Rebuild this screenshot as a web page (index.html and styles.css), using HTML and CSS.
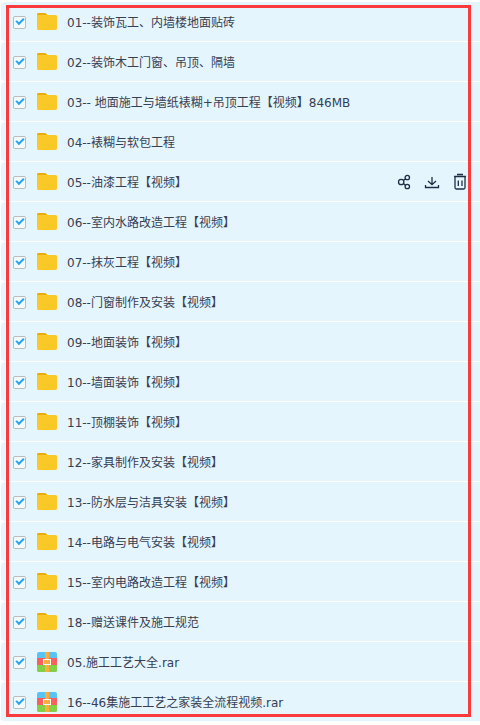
FILE: index.html
```html
<!DOCTYPE html>
<html lang="en">

<head>
    <meta charset="UTF-8" />
    <title>文件列表</title>
    <link rel="stylesheet" href="styles.css">
</head>

<body>
    <svg class="defs" width="0" height="0">
        <symbol id="folder" viewBox="0 0 20 17">
            <path d="M1.500 0h6c.6 0 1 .2 1.400.6L10.500 2H18.500c.8 0 1.500.7 1.500 1.500v12c0 .8-.7 1.500-1.500 1.500h-17C.7 17 0 16.300 0 15.500v-14C0 .7.700 0 1.500 0z" fill="#fac928" />
            <path d="M1.500 0h6c.6 0 1 .2 1.400.6L10.500 2H0v-.5C0 .7.700 0 1.500 0z" fill="#e8ad0c" />
        </symbol>
        <symbol id="rar" viewBox="0 0 20 20">
            <rect width="20" height="20" rx="2" fill="#58c4f6" />
            <rect y="6" width="20" height="7" fill="#fb6061" />
            <path d="M0 13h20v5a2 2 0 0 1-2 2H2a2 2 0 0 1-2-2z" fill="#86cf45" />
            <rect x="8" width="4" height="20" fill="#fbae3c" />
            <rect x="6.500" y="7.500" width="7" height="5" fill="#fbae3c" stroke="#fff" />
        </symbol>
    </svg>

    <div class="list">
        <div class="row">
            <input type="checkbox" class="check" checked />
            <svg class="icon"><use href="#folder" /></svg>
            <span class="name">01--装饰瓦工、内墙楼地面贴砖</span>
        </div>
        <div class="row">
            <input type="checkbox" class="check" checked />
            <svg class="icon"><use href="#folder" /></svg>
            <span class="name">02--装饰木工门窗、吊顶、隔墙</span>
        </div>
        <div class="row">
            <input type="checkbox" class="check" checked />
            <svg class="icon"><use href="#folder" /></svg>
            <span class="name">03-- 地面施工与墙纸裱糊+吊顶工程【视频】846MB</span>
        </div>
        <div class="row">
            <input type="checkbox" class="check" checked />
            <svg class="icon"><use href="#folder" /></svg>
            <span class="name">04--裱糊与软包工程</span>
        </div>
        <div class="row">
            <input type="checkbox" class="check" checked />
            <svg class="icon"><use href="#folder" /></svg>
            <span class="name">05--油漆工程【视频】</span>
            <div class="actions">
                <svg viewBox="0 0 18 18"><circle cx="6.200" cy="9" r="2.700" /><circle cx="12.300" cy="4.500" r="2.200" /><circle cx="12.300" cy="13.500" r="2.200" /><path d="M8.400 7.400l2.100-1.600M8.400 10.600l2.100 1.600" /></svg>
                <svg viewBox="0 0 18 18"><path d="M9 4v7.500M5 8l4 3.700L13 8M2.500 12v2.500h13V12" /></svg>
                <svg viewBox="0 0 18 18"><path d="M3 3.500h12M6 1.500h6M4 3.500v11c0 .8.500 1.500 1.300 1.500h7.400c.8 0 1.300-.7 1.300-1.500v-11M7.300 7.500v5.500M11 7.500v5.500" /></svg>
            </div>
        </div>
        <div class="row">
            <input type="checkbox" class="check" checked />
            <svg class="icon"><use href="#folder" /></svg>
            <span class="name">06--室内水路改造工程【视频】</span>
        </div>
        <div class="row">
            <input type="checkbox" class="check" checked />
            <svg class="icon"><use href="#folder" /></svg>
            <span class="name">07--抹灰工程【视频】</span>
        </div>
        <div class="row">
            <input type="checkbox" class="check" checked />
            <svg class="icon"><use href="#folder" /></svg>
            <span class="name">08--门窗制作及安装【视频】</span>
        </div>
        <div class="row">
            <input type="checkbox" class="check" checked />
            <svg class="icon"><use href="#folder" /></svg>
            <span class="name">09--地面装饰【视频】</span>
        </div>
        <div class="row">
            <input type="checkbox" class="check" checked />
            <svg class="icon"><use href="#folder" /></svg>
            <span class="name">10--墙面装饰【视频】</span>
        </div>
        <div class="row">
            <input type="checkbox" class="check" checked />
            <svg class="icon"><use href="#folder" /></svg>
            <span class="name">11--顶棚装饰【视频】</span>
        </div>
        <div class="row">
            <input type="checkbox" class="check" checked />
            <svg class="icon"><use href="#folder" /></svg>
            <span class="name">12--家具制作及安装【视频】</span>
        </div>
        <div class="row">
            <input type="checkbox" class="check" checked />
            <svg class="icon"><use href="#folder" /></svg>
            <span class="name">13--防水层与洁具安装【视频】</span>
        </div>
        <div class="row">
            <input type="checkbox" class="check" checked />
            <svg class="icon"><use href="#folder" /></svg>
            <span class="name">14--电路与电气安装【视频】</span>
        </div>
        <div class="row">
            <input type="checkbox" class="check" checked />
            <svg class="icon"><use href="#folder" /></svg>
            <span class="name">15--室内电路改造工程【视频】</span>
        </div>
        <div class="row">
            <input type="checkbox" class="check" checked />
            <svg class="icon"><use href="#folder" /></svg>
            <span class="name">18--赠送课件及施工规范</span>
        </div>
        <div class="row">
            <input type="checkbox" class="check" checked />
            <svg class="icon rar"><use href="#rar" /></svg>
            <span class="name">05.施工工艺大全.rar</span>
        </div>
        <div class="row">
            <input type="checkbox" class="check" checked />
            <svg class="icon rar"><use href="#rar" /></svg>
            <span class="name">16--46集施工工艺之家装全流程视频.rar</span>
        </div>
    </div>

    <!-- 红色标注框 -->
    <div class="mark"></div>
</body>

</html>
```

FILE: styles.css
```css
html,
body {
    height: 100%;
}

body {
    margin: 0;
    padding: 0;
    background-color: #fff;
    overflow: hidden;
    position: relative;
    font-family: "DejaVu Sans", "Noto Sans CJK SC", sans-serif;
}

.defs {
    position: absolute;
}

.list {
    padding-top: 2px;
    padding-left: 1px;
}

.row {
    display: flex;
    align-items: center;
    height: 39px;
    margin-bottom: 1px;
    padding-left: 12px;
    background-color: #e5f5fe;
    border-radius: 4px 0 0 4px;
}

.check {
    appearance: none;
    flex: none;
    position: relative;
    width: 13px;
    height: 13px;
    margin: 1px 11px 0 0;
    border: 1px solid #b9bdc2;
    border-radius: 2px;
    background-color: #f4fbff;
}

.check::after {
    content: "";
    position: absolute;
    left: 1.500px;
    top: 1.500px;
    width: 6px;
    height: 3px;
    border-left: 2.500px solid #1aa5f5;
    border-bottom: 2.500px solid #1aa5f5;
    transform: rotate(-45deg);
}

.icon {
    flex: none;
    width: 20px;
    height: 17px;
    margin-right: 10px;
}

.icon.rar {
    height: 20px;
}

.name {
    font-size: 12px;
    color: #354052;
    white-space: nowrap;
}

.actions {
    display: flex;
    gap: 10px;
    margin-left: auto;
    margin-right: 11px;
}

.actions svg {
    width: 18px;
    height: 18px;
    fill: none;
    stroke: #1f2d45;
    stroke-width: 1.300;
}

.mark {
    position: absolute;
    left: 6px;
    top: 5px;
    width: 459px;
    height: 706px;
    border: 3px solid #fb3a3d;
}
```
